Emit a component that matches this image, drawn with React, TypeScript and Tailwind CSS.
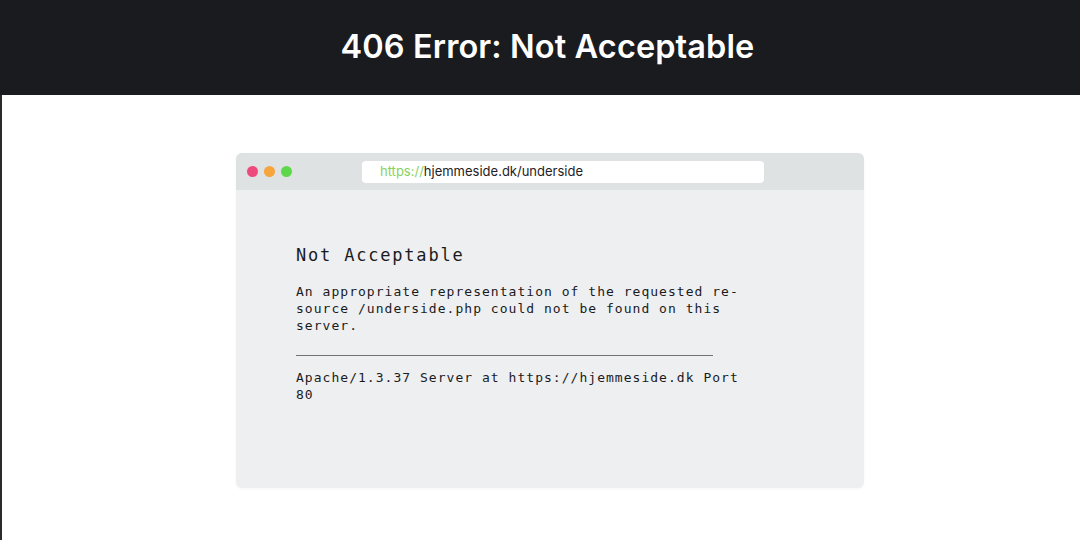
export default function App() {
  return (
    <div className="flex h-[540px] w-[1080px] flex-col bg-white">
      <header className="flex h-[95px] shrink-0 items-center justify-center bg-[#1a1b1f] pl-[15px]">
        <h1 className="font-['Inter',sans-serif] text-[32.5px] font-semibold tracking-[0.1px] text-white">
          406 Error: Not Acceptable
        </h1>
      </header>
      <main className="flex flex-1 border-l-2 border-[#2a2b2f] pl-[234px] pt-[58px]">
        <div className="flex h-[335px] w-[628px] flex-col overflow-hidden rounded-md bg-[#eeeff1] shadow-[0_1px_3px_rgba(0,0,0,0.04)]">
          <div className="flex h-[37px] shrink-0 items-center bg-[#dfe2e3] pl-[11px]">
            <div className="flex gap-[6px]">
              <span className="size-[11px] rounded-full bg-[#ee4a7c]" />
              <span className="size-[11px] rounded-full bg-[#f6a43c]" />
              <span className="size-[11px] rounded-full bg-[#5ed84a]" />
            </div>
            <div className="ml-[70px] flex h-[22px] w-[402px] items-center rounded-[4px] bg-white pl-[18px] font-['Inter',sans-serif] text-[13px]">
              <span className="text-[#86d261]">https://</span>
              <span className="text-[#1f2124]">hjemmeside.dk/underside</span>
            </div>
          </div>
          <div className="pl-[60px] pt-[54px] font-['DejaVu_Sans_Mono',monospace] text-[#1a1b1e]">
            <h2 className="text-[17px] leading-[22px] tracking-[1.8px]">Not Acceptable</h2>
            <p className="mt-[17px] w-[470px] text-[13px] leading-[17px] tracking-[1.03px]">
              An appropriate representation of the requested re-
              <br />
              source /underside.php could not be found on this
              <br />
              server.
            </p>
            <div className="mt-[21px] h-px w-[417px] bg-[#707275]" />
            <p className="mt-[13px] text-[13px] leading-[17px] tracking-[1.03px]">
              Apache/1.3.37 Server at https://hjemmeside.dk Port
              <br />
              80
            </p>
          </div>
        </div>
      </main>
    </div>
  );
}
